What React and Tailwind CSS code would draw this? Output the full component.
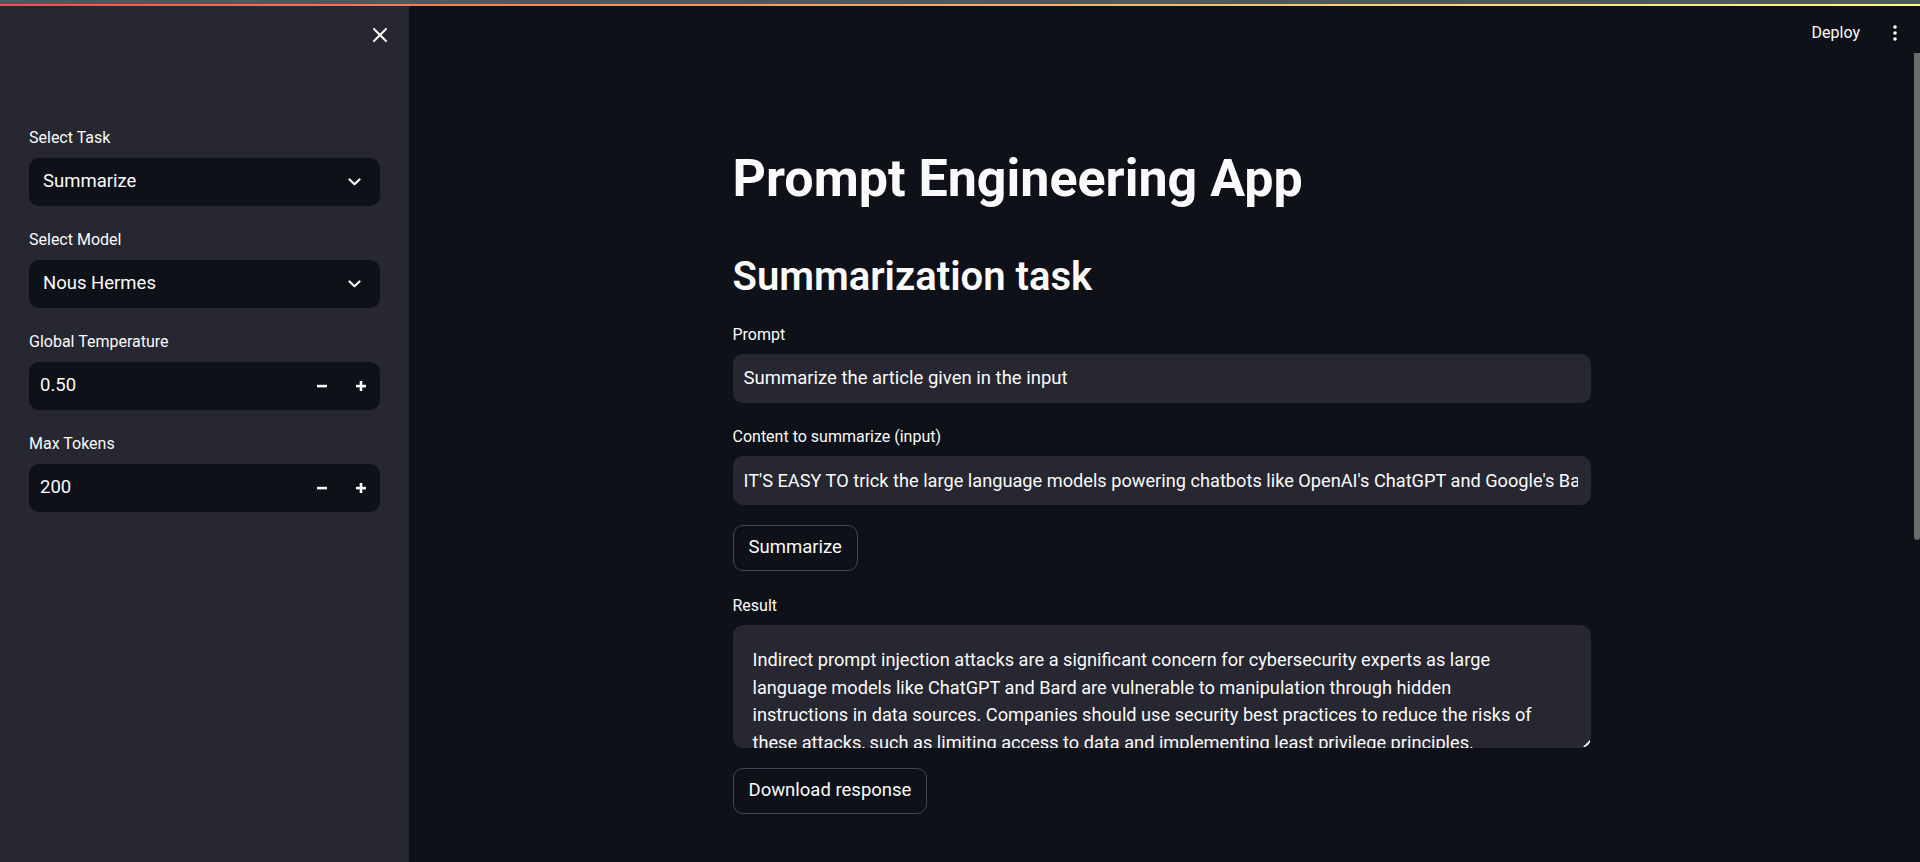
import React from 'react'

const SIDEBAR_FIELDS = [
  { label: 'Select Task', kind: 'select', value: 'Summarize' },
  { label: 'Select Model', kind: 'select', value: 'Nous Hermes' },
  { label: 'Global Temperature', kind: 'number', value: '0.50' },
  { label: 'Max Tokens', kind: 'number', value: '200' },
]

const RESULT_LINES = [
  'Indirect prompt injection attacks are a significant concern for cybersecurity experts as large',
  'language models like ChatGPT and Bard are vulnerable to manipulation through hidden',
  'instructions in data sources. Companies should use security best practices to reduce the risks of',
  'these attacks, such as limiting access to data and implementing least privilege principles.',
]

function Chevron() {
  return (
    <svg width="13" height="8" viewBox="0 0 13 8" fill="none">
      <path d="M1.5 1.5 L6.5 6.2 L11.5 1.5" stroke="#fafafa" strokeWidth="2.2" strokeLinecap="round" strokeLinejoin="round" />
    </svg>
  )
}

function SelectBox({ value }) {
  return (
    <div className="flex h-[48px] items-center justify-between rounded-[10px] bg-[#0e1117] pl-[14px] pr-[19px] text-[18.5px]">
      <span>{value}</span>
      <Chevron />
    </div>
  )
}

function NumberBox({ value }) {
  return (
    <div className="flex h-[48px] items-center rounded-[10px] bg-[#0e1117] pl-[11px] text-[18.5px]">
      <span className="flex-1">{value}</span>
      <div className="flex h-full w-[39px] items-center justify-center">
        <svg width="10" height="10" viewBox="0 0 10 10">
          <rect x="0" y="3.8" width="10" height="2.6" fill="#fafafa" />
        </svg>
      </div>
      <div className="flex h-full w-[39px] items-center justify-center">
        <svg width="10" height="10" viewBox="0 0 10 10">
          <rect x="0" y="3.8" width="10" height="2.6" fill="#fafafa" />
          <rect x="3.7" y="0" width="2.6" height="10" fill="#fafafa" />
        </svg>
      </div>
    </div>
  )
}

function Label({ children, className = '' }) {
  return <div className={`text-[16px] leading-[20px] text-[#fafafa] ${className}`}>{children}</div>
}

function Button({ children, className = '' }) {
  return (
    <div className={`inline-flex h-[46px] items-center rounded-[10px] border border-[#45474d] px-[15px] text-[18.5px] ${className}`}>
      {children}
    </div>
  )
}

export default function App() {
  return (
    <div className="flex h-[862px] w-full flex-col overflow-hidden bg-[#0e1117] text-[#fafafa] [font-family:Roboto,'Liberation_Sans',sans-serif]">
      <div className="h-[4px] bg-[#4a5960]" />
      <div className="h-[2px] bg-gradient-to-r from-[#ff4b4b] to-[#fffd80]" />

      <div className="flex min-h-0 flex-1">
        <aside className="w-[409px] shrink-0 bg-[#262730] px-[29px]">
          <div className="-mr-[7px] mt-[22px] flex h-[14px] justify-end">
            <svg width="14" height="14" viewBox="0 0 14 14">
              <path d="M1 1 L13 13 M13 1 L1 13" stroke="#fafafa" strokeWidth="2" strokeLinecap="square" />
            </svg>
          </div>

          <div className="mt-[86px] flex flex-col gap-[24px]">
            {SIDEBAR_FIELDS.map((f) => (
              <div key={f.label}>
                <Label className="mb-[10px]">{f.label}</Label>
                {f.kind === 'select' ? <SelectBox value={f.value} /> : <NumberBox value={f.value} />}
              </div>
            ))}
          </div>
        </aside>

        <main className="flex min-w-0 flex-1">
          <div className="flex min-w-0 flex-1 flex-col">
            <header className="flex h-[54px] items-center justify-end gap-[33px] pr-[17px]">
              <span className="text-[16px]">Deploy</span>
              <svg width="4" height="16" viewBox="0 0 4 16">
                <circle cx="2" cy="2" r="1.8" fill="#fafafa" />
                <circle cx="2" cy="8" r="1.8" fill="#fafafa" />
                <circle cx="2" cy="14" r="1.8" fill="#fafafa" />
              </svg>
            </header>

            <div className="mx-auto w-[858px]">
              <h1 className="mt-[88px] text-[52px] font-bold leading-[62px]">Prompt Engineering App</h1>
              <h2 className="mt-[43px] text-[40px] font-semibold leading-[48px]">Summarization task</h2>

              <Label className="mb-[9px] mt-[24px]">Prompt</Label>
              <div className="flex h-[49px] items-center rounded-[10px] bg-[#262730] pl-[11px] text-[18.5px]">
                Summarize the article given in the input
              </div>

              <Label className="mb-[9px] mt-[24px]">Content to summarize (input)</Label>
              <div className="flex h-[49px] items-center overflow-hidden whitespace-nowrap rounded-[10px] bg-[#262730] pl-[11px] pr-[13px] text-[18.2px]">
                <span className="overflow-hidden">
                  IT'S EASY TO trick the large language models powering chatbots like OpenAI's ChatGPT and Google's Ba
                </span>
              </div>

              <Button className="mt-[20px]">Summarize</Button>

              <Label className="mb-[9px] mt-[25px]">Result</Label>
              <div className="relative h-[123px] overflow-hidden rounded-[10px] bg-[#262730] pl-[20px] pt-[21px] text-[18.2px] leading-[27.5px]">
                {RESULT_LINES.map((line) => (
                  <div key={line} className="whitespace-nowrap">{line}</div>
                ))}
                <svg className="absolute bottom-[1px] right-[1px]" width="7" height="7" viewBox="0 0 7 7">
                  <path d="M7 0 L7 7 L0 7 Z" fill="#fafafa" />
                </svg>
              </div>

              <Button className="mt-[20px]">Download response</Button>
            </div>
          </div>

          <div className="w-[6px] shrink-0">
            <div className="mt-[47px] h-[487px] rounded-b-[3px] bg-[#6b6b6b]" />
          </div>
        </main>
      </div>
    </div>
  )
}
